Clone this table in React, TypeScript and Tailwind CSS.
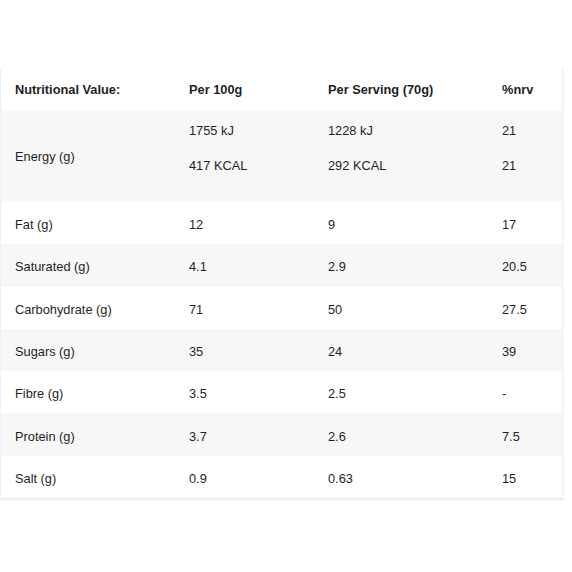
import React from "react";

const rows: [string, string, string, string][] = [
  ["Fat (g)", "12", "9", "17"],
  ["Saturated (g)", "4.1", "2.9", "20.5"],
  ["Carbohydrate (g)", "71", "50", "27.5"],
  ["Sugars (g)", "35", "24", "39"],
  ["Fibre (g)", "3.5", "2.5", "-"],
  ["Protein (g)", "3.7", "2.6", "7.5"],
  ["Salt (g)", "0.9", "0.63", "15"],
];

const grid = "grid grid-cols-[174px_139px_174px_1fr]";

export default function App() {
  return (
    <div
      className="w-[572px] h-[572px] bg-white pt-[68px] text-[12.8px] text-[#1f1f1f]"
      style={{ fontFamily: '"Liberation Sans", Arial, sans-serif' }}
    >
      <div className="w-[563px] border-l border-r border-[#f0f0f0] shadow-[0_2px_2px_rgba(0,0,0,0.08)]">
        <div className={`${grid} h-[42px] items-center font-bold`}>
          <div className="pl-[14px] pt-[2px]">Nutritional Value:</div>
          <div className="pl-[14px] pt-[2px]">Per 100g</div>
          <div className="pl-[14px] pt-[2px]">Per Serving (70g)</div>
          <div className="pl-[14px] pt-[2px]">%nrv</div>
        </div>
        <div className={`${grid} h-[92px] items-center bg-[#f7f7f7]`}>
          <div className="pl-[14px] pt-[2px]">Energy (g)</div>
          {[
            ["1755 kJ", "417 KCAL"],
            ["1228 kJ", "292 KCAL"],
            ["21", "21"],
          ].map((v, i) => (
            <div key={i} className="pl-[14px] flex flex-col gap-[15px] self-start pt-[11px] leading-[20px]">
              <div>{v[0]}</div>
              <div>{v[1]}</div>
            </div>
          ))}
        </div>
        {rows.map((r, i) => (
          <div
            key={r[0]}
            className={`${grid} h-[42.3px] items-center ${i % 2 === 1 ? "bg-[#f7f7f7]" : "bg-white"}`}
          >
            {r.map((c, j) => (
              <div key={j} className="pl-[14px] pt-[3px]">
                {c}
              </div>
            ))}
          </div>
        ))}
      </div>
    </div>
  );
}
